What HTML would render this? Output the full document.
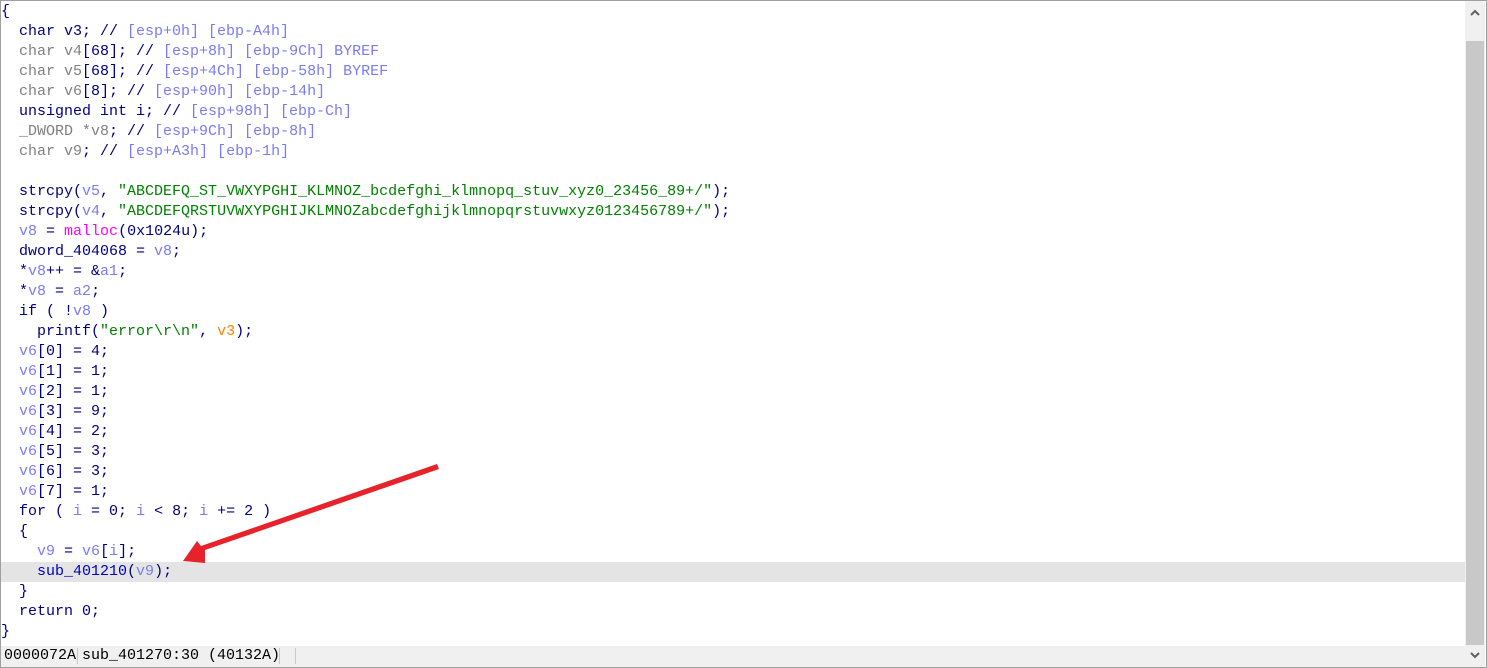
<!DOCTYPE html>
<html><head><style>
body{margin:0;width:1487px;height:668px;overflow:hidden;background:#fff;font-family:"Liberation Mono",monospace;}
#frame{position:absolute;left:0;top:0;width:1485px;height:666px;border:1px solid #a0a0a0;}
#code{position:absolute;left:1px;top:2px;font-size:15px;line-height:20px;color:#000080;white-space:pre;}
.l{height:20px;padding-left:0px;}
.hl{background:#e4e4e4;width:1464px;}
.g{color:#808080}.v{color:#7b7bf2}.s{color:#008000}.m{color:#ff00ff}.o{color:#ff8000}.f{color:#0000c0}
#sb{position:absolute;left:1465px;top:1px;width:20px;height:666px;background:#f0f0f0;}
#thumb{position:absolute;left:1466px;top:41px;width:18px;height:604px;background:#c8c8c8;}
#status{position:absolute;left:1px;top:646px;width:1464px;height:21px;background:#f0f0f0;font-size:15px;line-height:20px;color:#000;white-space:pre;}
.sep{position:absolute;top:2px;width:1px;height:16px;background:#c8c8c8;}
</style></head><body>
<div id="frame"></div>
<div id="code"><div class="l">{</div><div class="l">  char v3; // <span class="v">[esp+0h] [ebp-A4h]</span></div><div class="l">  <span class="g">char v4</span>[68]; // <span class="v">[esp+8h] [ebp-9Ch] BYREF</span></div><div class="l">  <span class="g">char v5</span>[68]; // <span class="v">[esp+4Ch] [ebp-58h] BYREF</span></div><div class="l">  <span class="g">char v6</span>[8]; // <span class="v">[esp+90h] [ebp-14h]</span></div><div class="l">  unsigned int i; // <span class="v">[esp+98h] [ebp-Ch]</span></div><div class="l">  <span class="g">_DWORD *v8</span>; // <span class="v">[esp+9Ch] [ebp-8h]</span></div><div class="l">  <span class="g">char v9</span>; // <span class="v">[esp+A3h] [ebp-1h]</span></div><div class="l"> </div><div class="l">  strcpy(<span class="v">v5</span>, <span class="s">"ABCDEFQ_ST_VWXYPGHI_KLMNOZ_bcdefghi_klmnopq_stuv_xyz0_23456_89+/"</span>);</div><div class="l">  strcpy(<span class="v">v4</span>, <span class="s">"ABCDEFQRSTUVWXYPGHIJKLMNOZabcdefghijklmnopqrstuvwxyz0123456789+/"</span>);</div><div class="l">  <span class="v">v8</span> = <span class="m">malloc</span>(0x1024u);</div><div class="l">  dword_404068 = <span class="v">v8</span>;</div><div class="l">  *<span class="v">v8</span>++ = &amp;<span class="v">a1</span>;</div><div class="l">  *<span class="v">v8</span> = <span class="v">a2</span>;</div><div class="l">  if ( !<span class="v">v8</span> )</div><div class="l">    printf(<span class="s">"error\r\n"</span>, <span class="o">v3</span>);</div><div class="l">  <span class="v">v6</span>[0] = 4;</div><div class="l">  <span class="v">v6</span>[1] = 1;</div><div class="l">  <span class="v">v6</span>[2] = 1;</div><div class="l">  <span class="v">v6</span>[3] = 9;</div><div class="l">  <span class="v">v6</span>[4] = 2;</div><div class="l">  <span class="v">v6</span>[5] = 3;</div><div class="l">  <span class="v">v6</span>[6] = 3;</div><div class="l">  <span class="v">v6</span>[7] = 1;</div><div class="l">  for ( <span class="v">i</span> = 0; <span class="v">i</span> &lt; 8; <span class="v">i</span> += 2 )</div><div class="l">  {</div><div class="l">    <span class="v">v9</span> = <span class="v">v6</span>[<span class="v">i</span>];</div><div class="l hl">    <span class="f">sub_401210</span>(<span class="v">v9</span>);</div><div class="l">  }</div><div class="l">  return 0;</div><div class="l">}</div></div>
<div id="sb"></div><div id="thumb"></div>
<svg style="position:absolute;left:1466px;top:1px" width="18" height="666"><path d="M5 14 L9 10 L13 14" stroke="#606060" stroke-width="2" fill="none"/><path d="M5 652 L9 656 L13 652" stroke="#606060" stroke-width="2" fill="none"/></svg>
<div id="status"><span style="position:absolute;left:3px">0000072A</span><span class="sep" style="left:76px"></span><span style="position:absolute;left:81px">sub_401270:30 (40132A)</span><span class="sep" style="left:278px"></span><span class="sep" style="left:294px"></span></div>
<svg style="position:absolute;left:0;top:0" width="1487" height="668"><polygon points="437,464 439,469 205,550 205,563 183,561 197,541 201,546" fill="#e8222a"/></svg>
</body></html>
